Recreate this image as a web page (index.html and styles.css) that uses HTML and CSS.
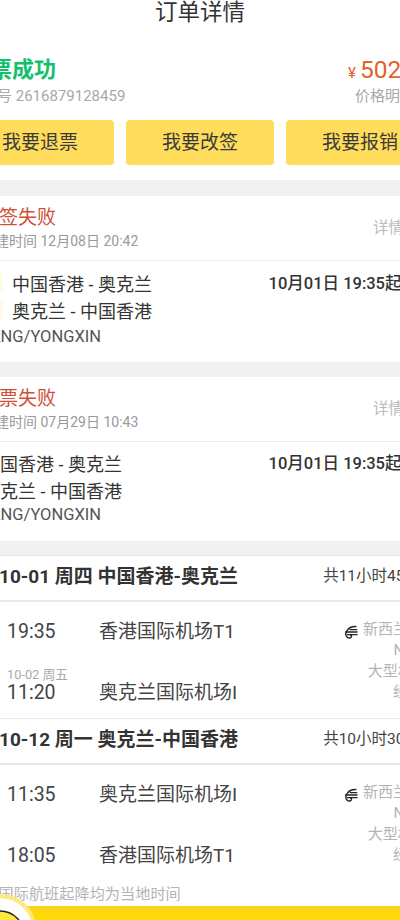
FILE: index.html
```html
<!DOCTYPE html>
<html lang="zh">
<head>
<meta charset="utf-8">
<title>订单详情</title>
<link rel="stylesheet" href="styles.css">
</head>
<body>
<div class="page">
  <header class="title">订单详情</header>
  <section class="summary">
    <div class="sum-row">
      <div>
        <div class="status">出票成功</div>
        <div class="order-no">订单号 2616879128459</div>
      </div>
      <div class="price-box">
        <div class="price"><span class="yen">¥</span>5028</div>
        <div class="price-link">价格明细</div>
      </div>
    </div>
    <div class="actions">
      <div class="btn">我要退票</div>
      <div class="btn">我要改签</div>
      <div class="btn">我要报销</div>
    </div>
  </section>

  <section class="card">
    <div class="card-head">
      <div>
        <div class="fail">改签失败</div>
        <div class="created">创建时间 12月08日 20:42</div>
      </div>
      <div class="more">详情</div>
    </div>
    <div class="card-body">
      <div class="body-row">
        <div class="routes">
          <div class="route"><span class="tag"></span>中国香港 - 奥克兰</div>
          <div class="route"><span class="tag"></span>奥克兰 - 中国香港</div>
        </div>
        <div class="dep">10月01日 19:35起飞</div>
      </div>
      <div class="pax">ZHANG/YONGXIN</div>
    </div>
  </section>

  <section class="card card-second">
    <div class="card-head">
      <div>
        <div class="fail">退票失败</div>
        <div class="created">创建时间 07月29日 10:43</div>
      </div>
      <div class="more">详情</div>
    </div>
    <div class="card-body">
      <div class="body-row">
        <div class="routes">
          <div class="route">中国香港 - 奥克兰</div>
          <div class="route">奥克兰 - 中国香港</div>
        </div>
        <div class="dep">10月01日 19:35起飞</div>
      </div>
      <div class="pax">ZHANG/YONGXIN</div>
    </div>
  </section>

  <div class="band"></div>

  <section class="trip">
    <div class="trip-head">
      <div class="trip-title">10-01 周四 中国香港-奥克兰</div>
      <div class="trip-total">共11小时45分</div>
    </div>
    <div class="trip-body">
      <div class="stops">
        <div class="stop">
          <div class="time">19:35</div>
          <div class="airport">香港国际机场T1</div>
        </div>
        <div class="stop">
          <div class="time"><span class="next-day">10-02 周五</span>11:20</div>
          <div class="airport">奥克兰国际机场I</div>
        </div>
      </div>
      <div class="flight">
        <div class="airline">
          <svg class="koru" viewBox="0 0 14 14" aria-hidden="true"><path d="M12.5 1.6C8.6 1.2 5 2.8 3.2 5.4 1.6 7.8 1.4 10.6 3.2 12.2c1.5 1.3 3.6 1 4.2-.4.4-1-.5-1.9-1.5-1.6" /><path d="M1.2 7h12.3M3 9.6h10.6M5.6 4.6h7.6" /></svg>
          <span>新西兰航空</span>
        </div>
        <div class="f-line f-no">NZ80</div>
        <div class="f-line">大型机789</div>
        <div class="f-line">经济舱</div>
      </div>
    </div>
  </section>

  <section class="trip">
    <div class="trip-head">
      <div class="trip-title">10-12 周一 奥克兰-中国香港</div>
      <div class="trip-total">共10小时30分</div>
    </div>
    <div class="trip-body">
      <div class="stops">
        <div class="stop">
          <div class="time">11:35</div>
          <div class="airport">奥克兰国际机场I</div>
        </div>
        <div class="stop">
          <div class="time">18:05</div>
          <div class="airport">香港国际机场T1</div>
        </div>
      </div>
      <div class="flight">
        <div class="airline">
          <svg class="koru" viewBox="0 0 14 14" aria-hidden="true"><path d="M12.5 1.6C8.6 1.2 5 2.8 3.2 5.4 1.6 7.8 1.4 10.6 3.2 12.2c1.5 1.3 3.6 1 4.2-.4.4-1-.5-1.9-1.5-1.6" /><path d="M1.2 7h12.3M3 9.6h10.6M5.6 4.6h7.6" /></svg>
          <span>新西兰航空</span>
        </div>
        <div class="f-line f-no">NZ81</div>
        <div class="f-line">大型机789</div>
        <div class="f-line">经济舱</div>
      </div>
    </div>
  </section>

  <div class="note">*国际航班起降均为当地时间</div>
</div>
<div class="bottom-bar"></div>
<div class="mascot">
  <svg viewBox="0 0 76 40" aria-hidden="true">
    <circle cx="38" cy="38" r="37" fill="#ffe97a"/>
    <circle cx="38" cy="38" r="33" fill="#fff"/>
    <circle cx="38" cy="42" r="24" fill="#ffe93a" stroke="#222" stroke-width="1.5"/>
  </svg>
</div>
</body>
</html>
```
FILE: styles.css
```css
* { box-sizing: border-box; }
html, body {
  margin: 0;
  height: 920px;
  overflow: hidden;
  background: #fff;
}
body {
  position: relative;
  font-family: Roboto, "Noto Sans CJK SC", sans-serif;
  color: #333;
}
.page {
  width: 492px;
  margin-left: -46px;
}
.title {
  height: 44px;
  line-height: 24px;
  font-size: 22.5px;
  text-align: center;
  color: #333;
}
.summary {
  height: 136px;
  padding: 0 12px;
}
.sum-row {
  display: flex;
  justify-content: space-between;
  height: 76px;
  padding: 12px 19px 0 1px;
}
.status {
  padding-left: 1px;
  font-size: 22px;
  line-height: 28px;
  font-weight: 700;
  color: #12c06c;
}
.order-no {
  margin-top: 2px;
  font-size: 15px;
  line-height: 20px;
  color: #a8a8a8;
}
.price-box { text-align: right; }
.price {
  font-size: 24.5px;
  line-height: 28px;
  color: #e2622c;
}
.yen { font-size: 15px; margin-right: 4px; }
.price-link {
  margin-top: -1px;
  font-size: 15px;
  line-height: 20px;
  color: #a8a8a8;
}
.actions {
  display: flex;
  gap: 12px;
}
.btn {
  flex: 1;
  height: 45px;
  border-radius: 4px;
  background: #ffdc5c;
  font-size: 19px;
  line-height: 46px;
  text-align: center;
  color: #3a3a3a;
}
.card {
  border-top: 16px solid #f0f1f3;
  background: #fff;
}
.card-second { border-top-width: 15px; }
.card-head {
  display: flex;
  justify-content: space-between;
  align-items: center;
  height: 65px;
  padding: 0 42px 0 26px;
  border-bottom: 1px solid #eceded;
}
.fail {
  font-size: 19px;
  line-height: 24px;
  color: #cf5038;
}
.created {
  margin-top: 1px;
  padding-left: 1px;
  font-size: 14px;
  line-height: 20px;
  color: #999;
}
.more {
  margin-bottom: 4px;
  font-size: 15.5px;
  color: #bbb;
}
.card-body {
  height: 101px;
  padding: 8px 28px 0 28px;
}
.card-second .card-body {
  height: 99px;
  padding-top: 7px;
}
.body-row {
  display: flex;
  justify-content: space-between;
}
.route {
  display: flex;
  align-items: center;
  height: 27px;
  font-size: 18px;
  color: #333;
}
.tag {
  width: 18px;
  height: 18px;
  margin-left: -27px;
  margin-right: 9px;
  background: #fffbe6;
}
.card:not(.card-second) .route { padding-left: 30px; }
.dep {
  margin-top: 3px;
  font-size: 16.5px;
  line-height: 24px;
  font-weight: 500;
  color: #333;
}
.pax {
  margin-top: 2px;
  margin-left: -14px;
  font-size: 16.5px;
  line-height: 24px;
  color: #555;
}
.card-second .pax { margin-top: 0; }
.band {
  height: 14px;
  background: #f0f1f3;
}
.trip-head {
  display: flex;
  justify-content: space-between;
  align-items: center;
  height: 47px;
  padding: 0 26px 8px 45px;
  border-top: 1px solid #e8e8e8;
  border-bottom: 2px solid #e8e8e8;
}
.trip-title {
  font-size: 19px;
  font-weight: 700;
  color: #333;
}
.trip-total {
  font-size: 15.5px;
  color: #444;
}
.trip-body {
  display: flex;
  justify-content: space-between;
  height: 116px;
  padding: 0 8px 0 53px;
}
.stops {
  display: flex;
  flex-direction: column;
  gap: 37px;
  padding-top: 18px;
}
.stop {
  display: flex;
  height: 24px;
}
.time {
  position: relative;
  width: 92px;
  font-size: 19.5px;
  line-height: 24px;
  color: #444;
}
.next-day {
  position: absolute;
  left: 0;
  top: -14px;
  font-size: 12.8px;
  line-height: 16px;
  white-space: nowrap;
  color: #aaa;
}
.airport {
  font-size: 19px;
  line-height: 24px;
  color: #444;
}
.flight {
  padding-top: 17px;
  width: 96px;
  text-align: right;
  font-size: 15px;
  line-height: 21px;
  color: #b4b4b4;
}
.f-no { padding-right: 8px; }
.airline {
  display: flex;
  justify-content: flex-end;
  gap: 5px;
  white-space: nowrap;
}
.koru {
  flex: none;
  width: 14px;
  height: 14px;
  margin-top: 6px;
  fill: none;
  stroke: #222;
  stroke-width: 1.4;
}
.note {
  margin-top: 3px;
  padding-left: 38px;
  font-size: 15.2px;
  line-height: 20px;
  color: #b4b4b4;
}
.bottom-bar {
  position: absolute;
  left: 0;
  right: 0;
  top: 906px;
  height: 14px;
  background: linear-gradient(#ffd21a, #ffdd00);
}
.mascot {
  position: absolute;
  left: -38px;
  top: 893px;
  width: 76px;
  height: 27px;
  overflow: hidden;
}
.mascot svg { display: block; width: 76px; height: 40px; }
```
